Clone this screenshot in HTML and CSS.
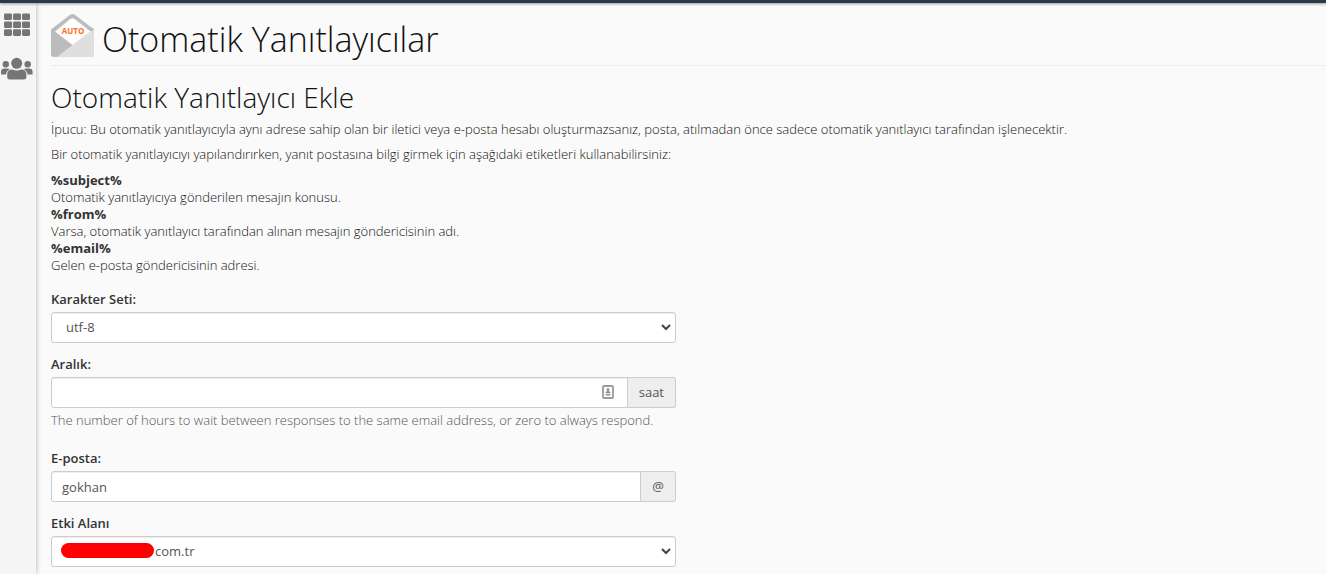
FILE: index.html
```html
<!DOCTYPE html>
<html lang="tr">
<head>
    <meta charset="UTF-8">
    <meta name="viewport" content="width=device-width, initial-scale=1">
    <title>Otomatik Yanıtlayıcılar</title>
    <link rel="stylesheet" href="styles.css">
</head>
<body>
    <div class="topBar"></div>
    <div class="wrapper">
        <nav class="sidebar">
            <a href="#" aria-label="Home">
                <svg width="26" height="24" viewBox="0 0 26 24" fill="#757575">
                    <rect x="0" y="0.5" width="8" height="6.6" rx="1.3"/>
                    <rect x="9" y="0.5" width="8" height="6.6" rx="1.3"/>
                    <rect x="18" y="0.5" width="8" height="6.6" rx="1.3"/>
                    <rect x="0" y="8.4" width="8" height="6.6" rx="1.3"/>
                    <rect x="9" y="8.4" width="8" height="6.6" rx="1.3"/>
                    <rect x="18" y="8.4" width="8" height="6.6" rx="1.3"/>
                    <rect x="0" y="16.3" width="8" height="6.6" rx="1.3"/>
                    <rect x="9" y="16.3" width="8" height="6.6" rx="1.3"/>
                    <rect x="18" y="16.3" width="8" height="6.6" rx="1.3"/>
                </svg>
            </a>
            <a href="#" aria-label="User Manager">
                <svg width="32" height="24" viewBox="0 0 32 24" fill="#757575">
                    <circle cx="15.7" cy="6.3" r="5.5"/>
                    <circle cx="4.8" cy="7.2" r="3.2"/>
                    <circle cx="26.7" cy="7.2" r="3.2"/>
                    <path d="M6.2 20V17.5Q6.2 12.6 11.4 12.6Q15.7 14.6 20 12.6Q25.4 12.6 25.4 17.5V20Q25.4 22.5 22.7 22.5H8.9Q6.2 22.5 6.2 20Z"/>
                    <path d="M0 17.6V15Q0 11.6 3.3 11.6H6.2Q8 11.6 8.7 12.3Q5.4 14 5 17.6Z"/>
                    <path d="M31.6 17.6V15Q31.6 11.6 28.3 11.6H25.4Q23.6 11.6 22.9 12.3Q26.2 14 26.6 17.6Z"/>
                </svg>
            </a>
        </nav>
        <main class="content">
            <h1 class="pageHeader">
                <svg width="43" height="43" viewBox="0 0 43 43" aria-hidden="true">
                    <path d="M0 15.5L18.5 1.2Q21.5 -1 24.5 1.2L43 15.5V40Q43 43 40 43H3Q0 43 0 40Z" fill="#bcbcbc"/>
                    <path d="M43 14.5V40Q43 43 40 43H6L21.5 31Z" fill="#dfdfdf"/>
                    <path d="M40 13L43 15.3L41 17.3L37.5 14.8Z" fill="#bcbcbc"/>
                    <path d="M4 17.5L19 5.2Q21.5 3.4 24 5.2L39.5 17.5L21.5 31Z" fill="#fff"/>
                    <text x="22" y="20" text-anchor="middle" class="iconText">AUTO</text>
                </svg>
                <span>Otomatik Yanıtlayıcılar</span>
            </h1>
            <h2>Otomatik Yanıtlayıcı Ekle</h2>
            <p>İpucu: Bu otomatik yanıtlayıcıyla aynı adrese sahip olan bir iletici veya e-posta hesabı oluşturmazsanız, posta, atılmadan önce sadece otomatik yanıtlayıcı tarafından işlenecektir.</p>
            <p>Bir otomatik yanıtlayıcıyı yapılandırırken, yanıt postasına bilgi girmek için aşağıdaki etiketleri kullanabilirsiniz:</p>
            <dl>
                <dt>%subject%</dt>
                <dd>Otomatik yanıtlayıcıya gönderilen mesajın konusu.</dd>
                <dt>%from%</dt>
                <dd>Varsa, otomatik yanıtlayıcı tarafından alınan mesajın göndericisinin adı.</dd>
                <dt>%email%</dt>
                <dd>Gelen e-posta göndericisinin adresi.</dd>
            </dl>
            <form>
                <div class="formGroup">
                    <label for="charset">Karakter Seti:</label>
                    <div class="selectBox">
                        <select id="charset" class="formControl">
                            <option>utf-8</option>
                        </select>
                        <svg class="arrow" width="10" height="7" viewBox="0 0 10 7"><path d="M1 1L5 5L9 1"/></svg>
                    </div>
                </div>
                <div class="formGroup withHelp">
                    <label for="interval">Aralık:</label>
                    <div class="inputGroup">
                        <input id="interval" type="text" class="formControl">
                        <svg class="fillIcon" width="12" height="14" viewBox="0 0 12 14">
                            <rect x="1" y="1" width="10" height="12" rx="1" fill="#fff" stroke="#999" stroke-width="1.8"/>
                            <circle cx="6" cy="4.6" r="1.4" fill="#888"/>
                            <path d="M3.5 8.2Q3.5 6 6 6Q8.5 6 8.5 8.2ZM3.5 9.2H8.5V10.6H3.5Z" fill="#888"/>
                        </svg>
                        <span class="addon">saat</span>
                    </div>
                    <div class="helpText">The number of hours to wait between responses to the same email address, or zero to always respond.</div>
                </div>
                <div class="formGroup">
                    <label for="email">E-posta:</label>
                    <div class="inputGroup">
                        <input id="email" type="text" class="formControl" value="gokhan">
                        <span class="addon">@</span>
                    </div>
                </div>
                <div class="formGroup">
                    <label for="domain">Etki Alanı</label>
                    <div class="selectBox">
                        <select id="domain" class="formControl domainSelect">
                            <option>com.tr</option>
                        </select>
                        <span class="mask"></span>
                        <svg class="arrow" width="10" height="7" viewBox="0 0 10 7"><path d="M1 1L5 5L9 1"/></svg>
                    </div>
                </div>
            </form>
        </main>
    </div>
</body>
</html>
```
FILE: styles.css
```css
* {
    box-sizing: border-box;
}

body {
    margin: 0;
    min-height: 100vh;
    display: flex;
    flex-direction: column;
    background: #fafafa;
    color: #111;
    font-family: "Open Sans", "Noto Sans", sans-serif;
    font-size: 13px;
    font-weight: 300;
    line-height: 17px;
}

.topBar {
    height: 3px;
    background: #293a4a;
    box-shadow: 0 1px 3px rgba(0, 0, 0, 0.4);
    position: relative;
}

.wrapper {
    flex: 1;
    display: flex;
}

.sidebar {
    width: 36px;
    padding: 10px 0 0;
    display: flex;
    flex-direction: column;
    gap: 20px;
    background: #f5f5f5;
    box-shadow: 0 0 5px rgba(0, 0, 0, 0.3);
}

.sidebar a {
    display: flex;
    justify-content: center;
    padding-right: 3px;
}

.sidebar svg {
    display: block;
}

.content {
    flex: 1;
    padding: 11px 0 7px 15px;
}

.pageHeader {
    display: flex;
    gap: 8px;
    margin: 0 0 16px;
    padding-bottom: 8px;
    border-bottom: 1px solid #eee;
    font-size: 34px;
    font-weight: 300;
    line-height: 43px;
}

.pageHeader span {
    padding-top: 8px;
    line-height: 35px;
}

.iconText {
    fill: #ff6c2c;
    font-size: 8px;
    font-weight: 700;
}

h2 {
    margin: 0 0 8px;
    font-size: 28px;
    font-weight: 300;
    line-height: 31px;
}

p {
    margin: 0 0 8px;
}

dl {
    margin: 9px 0 17px;
}

dt {
    color: #333;
    font-weight: 700;
}

dd {
    margin: 0;
}

form {
    max-width: 625px;
}

.formGroup {
    margin-bottom: 13px;
}

.formGroup:last-child {
    margin-bottom: 0;
}

.withHelp {
    margin-bottom: 21px;
}

label {
    display: block;
    margin-bottom: 4px;
    color: #333;
    font-weight: 600;
}

.formControl {
    display: block;
    width: 100%;
    height: 31px;
    padding: 0 11px;
    border: 1px solid #ccc;
    border-radius: 3px;
    background: #fff;
    box-shadow: inset 0 1px 1px rgba(0, 0, 0, 0.075);
    color: #555;
    font: inherit;
    font-weight: 400;
}

select.formControl {
    appearance: none;
    padding: 0 14px;
}

select.domainSelect {
    padding-left: 103px;
}

.selectBox,
.inputGroup {
    position: relative;
}

.inputGroup {
    display: flex;
}

.inputGroup .formControl {
    flex: 1;
    padding: 0 10px;
    border-radius: 3px 0 0 3px;
}

.arrow {
    position: absolute;
    right: 5px;
    top: 12px;
    fill: none;
    stroke: #444;
    stroke-width: 2;
}

.fillIcon {
    position: absolute;
    right: 62px;
    top: 8px;
}

.addon {
    padding: 0 11px;
    border: 1px solid #ccc;
    border-left: 0;
    border-radius: 0 3px 3px 0;
    background: #eee;
    color: #555;
    font-weight: 400;
    line-height: 28px;
}

.mask {
    position: absolute;
    left: 10px;
    top: 7px;
    width: 93px;
    height: 15px;
    border-radius: 8px;
    background: #f00;
}

.helpText {
    margin-top: 4px;
    color: #555;
}
```
